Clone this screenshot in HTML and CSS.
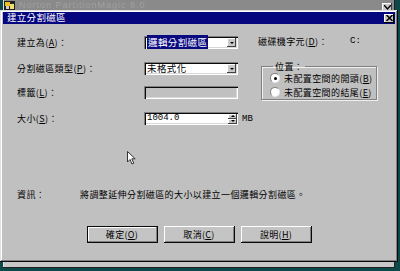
FILE: index.html
```html
<!DOCTYPE html>
<html lang="zh-Hant">
<head>
  <meta charset="UTF-8" />
  <title>建立分割磁區</title>
  <link rel="stylesheet" href="styles.css">
</head>
<body>
  <div class="desktop">
    <div class="bgwin">
      <div class="bgwin-title">
        <svg class="app-icon" width="12" height="10" viewBox="0 0 12 10">
          <rect x="0" y="1" width="11" height="9" fill="#202020"/>
          <rect x="1" y="2" width="5" height="4" fill="#e8c020"/>
          <rect x="6" y="4" width="4" height="5" fill="#f0e070"/>
          <rect x="2" y="6" width="3" height="3" fill="#d0d0d0"/>
        </svg>
        <span class="bgwin-name">Norton PartitionMagic 8.0</span>
        <span class="bgwin-btn">
          <svg width="7" height="5" viewBox="0 0 7 5"><path d="M0 0 L3.5 4 L7 0" fill="none" stroke="#000" stroke-width="1.4"/></svg>
        </span>
      </div>
    </div>

    <div class="dialog">
      <div class="titlebar">
        <span class="title">建立分割磁區</span>
        <span class="close">
          <svg width="7" height="6" viewBox="0 0 7 6"><path d="M0.5 0 L6.5 6 M6.5 0 L0.5 6" stroke="#000" stroke-width="1.5"/></svg>
        </span>
      </div>

      <div class="dlg-body">
        <div class="form">
          <label class="lbl">建立為(<u>A</u>)：</label>
          <div class="combo">
            <span class="combo-text"><span class="sel">邏輯分割磁區</span></span>
            <span class="drop"><i class="tri"></i></span>
          </div>
          <div class="drive">
            <span class="drive-lbl">磁碟機字元(<u>D</u>)：</span>
            <span class="mono">C:</span>
          </div>

          <label class="lbl">分割磁區類型(<u>P</u>)：</label>
          <div class="combo">
            <span class="combo-text">未格式化</span>
            <span class="drop"><i class="tri"></i></span>
          </div>
          <fieldset class="group">
            <legend>位置：</legend>
            <div class="radio-row"><span class="radio checked"></span>未配置空間的開頭(<u>B</u>)</div>
            <div class="radio-row"><span class="radio"></span>未配置空間的結尾(<u>E</u>)</div>
          </fieldset>

          <label class="lbl">標籤(<u>L</u>)：</label>
          <div class="textbox disabled"></div>

          <label class="lbl">大小(<u>S</u>)：</label>
          <div class="textbox spin-box">
            <span class="mono size-val">1004.0</span>
            <span class="spinner">
              <span class="spin-btn"><i class="tri-up"></i></span>
              <span class="spin-btn"><i class="tri-small"></i></span>
            </span>
          </div>
          <span class="unit mono">MB</span>
        </div>

        <div class="info">
          <span class="info-lbl">資訊：</span>
          <span class="info-text">將調整延伸分割磁區的大小以建立一個邏輯分割磁區。</span>
        </div>

        <div class="actions">
          <button class="btn default">確定(<u>O</u>)</button>
          <button class="btn">取消(<u>C</u>)</button>
          <button class="btn">說明(<u>H</u>)</button>
        </div>
      </div>
    </div>

    <svg class="cursor" width="10" height="14" viewBox="0 0 10 14">
      <path d="M0.5 0.5 L0.5 11 L3 8.5 L5 13 L6.8 12.2 L4.8 7.8 L8.2 7.8 Z" fill="#fff" stroke="#333" stroke-width="1"/>
    </svg>
  </div>
</body>
</html>
```

FILE: styles.css
```css
body {
  margin: 0;
  background-color: #0c4a4a;
  font-family: "Noto Sans CJK TC", "Liberation Sans", sans-serif;
  font-size: 9px;
  line-height: 1;
  color: #000;
}

.desktop {
  position: relative;
  width: 400px;
  height: 271px;
  overflow: hidden;
}

/* window behind the dialog */
.bgwin {
  position: absolute;
  left: 3px;
  top: -6px;
  width: 392px;
  height: 274px;
  background-color: #c8c8c8;
  box-shadow: inset -1px -1px #202020, inset 1px 1px #e0e0e0;
}

.bgwin-title {
  display: flex;
  align-items: center;
  height: 15px;
  margin: 1px 1px 0;
  background-color: #8a8a8a;
}

.app-icon {
  margin: 4px 3px 0 0;
}

.bgwin-name {
  margin-top: 5px;
  color: #a0a0a0;
  font-family: "Liberation Sans", sans-serif;
  font-size: 9px;
  letter-spacing: 1px;
}

.bgwin-btn {
  margin: 9px 2px 0 auto;
  width: 10px;
  height: 8px;
  background-color: #c8c8c8;
  box-shadow: inset -1px -1px #404040, inset 1px 1px #fff;
  display: flex;
  align-items: center;
  justify-content: center;
}

/* the dialog itself */
.dialog {
  position: absolute;
  left: 0;
  top: 10px;
  width: 398px;
  height: 252px;
  box-sizing: border-box;
  padding: 2px 3px 3px 3px;
  background-color: #c0c0c0;
  box-shadow: inset -1px -1px #0a0a0a, inset 1px 1px #e0e0e0, inset -2px -2px #808080, inset 2px 2px #fff;
}

.titlebar {
  display: flex;
  align-items: center;
  height: 12px;
  background-color: #06067e;
  padding-left: 4px;
}

.title {
  color: #fff;
  font-size: 9.5px;
  letter-spacing: 0.3px;
}

.close {
  margin-left: auto;
  margin-right: 1px;
  width: 10px;
  height: 9px;
  background-color: #c8c8c8;
  box-shadow: inset -1px -1px #000, inset 1px 1px #fff;
  display: flex;
  align-items: center;
  justify-content: center;
}

.dlg-body {
  padding: 12px 0 0 14px;
}

.form {
  display: grid;
  grid-template-columns: 127px 94px 1fr;
  grid-template-rows: 26px 24px 26px 14px;
  align-items: start;
}

.lbl {
  padding-top: 2px;
  letter-spacing: 0.4px;
}

u {
  text-decoration: underline;
  text-underline-offset: 1px;
}

.mono {
  font-family: "Liberation Mono", monospace;
}

.combo,
.textbox {
  height: 13px;
  box-sizing: border-box;
  background-color: #fff;
  box-shadow: inset 1px 1px #808080, inset 2px 2px #0a0a0a, inset -1px -1px #fff, inset -2px -2px #d8d8d8;
  display: flex;
  align-items: center;
  padding: 2px;
}

.combo-text {
  flex: 1;
  padding-left: 1px;
  font-size: 9.5px;
  letter-spacing: 0.4px;
}

.sel {
  background-color: #0a0a80;
  color: #fff;
  padding: 0 1px;
}

.drop {
  width: 9px;
  height: 9px;
  background-color: #c8c8c8;
  box-shadow: inset -1px -1px #404040, inset 1px 1px #fff;
  display: flex;
  align-items: center;
  justify-content: center;
}

.tri {
  width: 0;
  height: 0;
  border-left: 2px solid transparent;
  border-right: 2px solid transparent;
  border-top: 2px solid #000;
}

.drive {
  display: flex;
  margin-left: 20px;
  padding-top: 1px;
}

.drive-lbl {
  width: 92px;
  letter-spacing: 0.4px;
}

.group {
  grid-row: 2 / 4;
  grid-column: 3;
  margin: 0 0 0 23px;
  width: 116px;
  height: 38px;
  box-sizing: border-box;
  padding: 0 0 0 8px;
  border: 1px solid #808080;
  box-shadow: 1px 1px #f0f0f0, inset 1px 1px #f0f0f0;
}

.group legend {
  padding: 0 2px;
  margin-left: 3px;
  letter-spacing: 0.4px;
}

.radio-row {
  display: flex;
  align-items: center;
  height: 14px;
  letter-spacing: 0.4px;
}

.radio {
  width: 8px;
  height: 8px;
  border-radius: 50%;
  margin-right: 4px;
  background-color: #fff;
  border: 1px solid #808080;
  border-right-color: #e8e8e8;
  border-bottom-color: #e8e8e8;
  position: relative;
}

.radio.checked::after {
  content: "";
  position: absolute;
  left: 3px;
  top: 3px;
  width: 3px;
  height: 3px;
  border-radius: 50%;
  background-color: #000;
}

.textbox.disabled {
  background-color: #c0c0c0;
}

.spin-box {
  padding-right: 1px;
}

.size-val {
  flex: 1;
  padding-left: 1px;
  font-size: 9px;
}

.spinner {
  display: flex;
  flex-direction: column;
  width: 9px;
}

.spin-btn {
  height: 5px;
  background-color: #c8c8c8;
  box-shadow: inset -1px -1px #404040, inset 1px 1px #fff;
  display: flex;
  align-items: center;
  justify-content: center;
}

.tri-up {
  border-left: 2px solid transparent;
  border-right: 2px solid transparent;
  border-bottom: 2px solid #000;
}

.tri-small {
  border-left: 2px solid transparent;
  border-right: 2px solid transparent;
  border-top: 2px solid #000;
}

.unit {
  margin: 3px 0 0 4px;
  font-size: 9px;
}

.info {
  display: flex;
  margin-top: 64px;
  letter-spacing: 0.4px;
}

.info-lbl {
  width: 63px;
}

.actions {
  display: flex;
  justify-content: center;
  gap: 6px;
  margin: 27px 0 0 -14px;
}

.btn {
  width: 71px;
  height: 17px;
  padding: 0;
  border: none;
  background-color: #c4c4c4;
  font-family: inherit;
  font-size: 9px;
  letter-spacing: 0.3px;
  box-shadow: inset -1px -1px #0a0a0a, inset 1px 1px #fff, inset -2px -2px #808080;
}

.btn.default {
  box-shadow: inset -1px -1px #0a0a0a, inset 1px 1px #0a0a0a, inset -2px -2px #808080, inset 2px 2px #fff;
}

.cursor {
  position: absolute;
  left: 127px;
  top: 151px;
}
```
